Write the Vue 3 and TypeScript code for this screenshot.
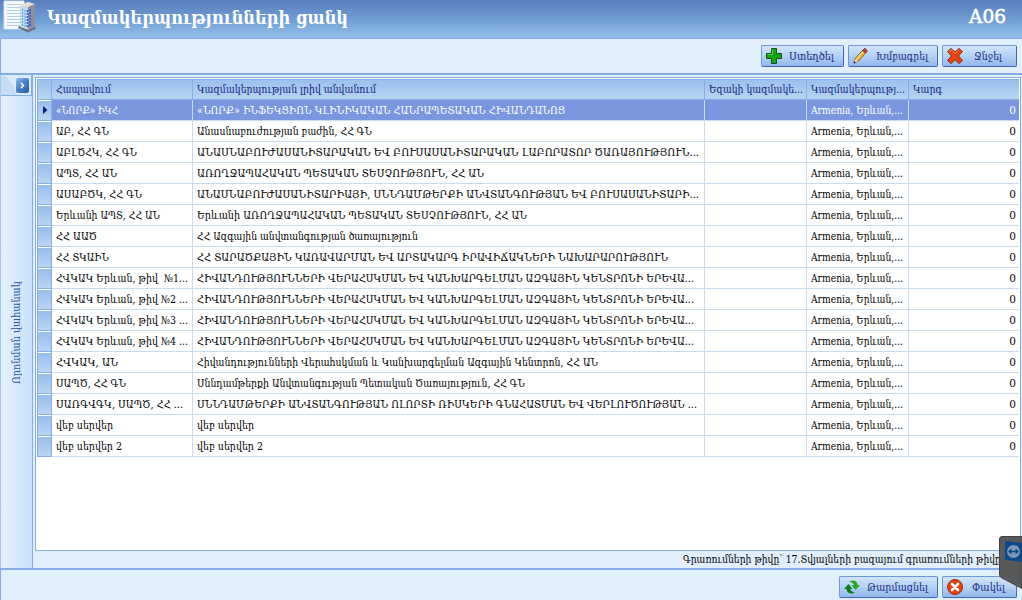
<script setup lang="ts">
import type { Directive } from 'vue'

interface Row {
  short: string
  shortWidth: number
  full: string
  fullWidth: number
}

// Condenses or stretches a label so it takes exactly the given advance width.
const vFit: Directive<HTMLElement, number> = {
  mounted(el, { value, arg }) {
    if (arg === 'vertical') {
      el.style.transform = `scaleY(${value / el.offsetHeight})`
      return
    }
    const natural = el.getBoundingClientRect().width
    el.style.transform = `scaleX(${value / natural})`
    el.style.marginRight = `${value - natural}px`
  },
}

const centre = 'ՀԻՎԱՆԴՈՒԹՅՈՒՆՆԵՐԻ ՎԵՐԱՀՍԿՄԱՆ ԵՎ ԿԱՆԽԱՐԳԵԼՄԱՆ ԱԶԳԱՅԻՆ ԿԵՆՏՐՈՆԻ ԵՐԵՎԱ...'

const columns = [
  { label: 'Հապավում', width: 55 },
  { label: 'Կազմակերպության լրիվ անվանում', width: 179 },
  { label: 'Եզակի կազմակե...', width: 94 },
  { label: 'Կազմակերպությ...', width: 94 },
  { label: 'Կարգ', width: 29 },
]

const rows: Row[] = [
  { short: '«ՆՈՐՔ» ԻԿՀ', shortWidth: 62, full: '«ՆՈՐՔ» ԻՆՖԵԿՑԻՈՆ ԿԼԻՆԻԿԱԿԱՆ ՀԱՆՐԱՊԵՏԱԿԱՆ ՀԻՎԱՆԴԱՆՈՑ', fullWidth: 368 },
  { short: 'ԱԲ, ՀՀ ԳՆ', shortWidth: 53, full: 'Անասնաբուժության բաժին, ՀՀ ԳՆ', fullWidth: 175 },
  { short: 'ԱԲԼԾՀԿ, ՀՀ ԳՆ', shortWidth: 81, full: 'ԱՆԱՍՆԱԲՈՒԺԱՍԱՆԻՏԱՐԱԿԱՆ ԵՎ ԲՈՒՍԱՍԱՆԻՏԱՐԱԿԱՆ ԼԱԲՈՐԱՏՈՐ ԾԱՌԱՅՈՒԹՅՈՒՆ...', fullWidth: 502 },
  { short: 'ԱՊՏ, ՀՀ ԱՆ', shortWidth: 61, full: 'ԱՌՈՂՋԱՊԱՀԱԿԱՆ ՊԵՏԱԿԱՆ ՏԵՍՉՈՒԹՅՈՒՆ, ՀՀ ԱՆ', fullWidth: 287 },
  { short: 'ԱՍԱԲԾԿ, ՀՀ ԳՆ', shortWidth: 86, full: 'ԱՆԱՍՆԱԲՈՒԺԱՍԱՆԻՏԱՐԻԱՅԻ, ՍՆՆԴԱՄԹԵՐՔԻ ԱՆՎՏԱՆԳՈՒԹՅԱՆ ԵՎ ԲՈՒՍԱՍԱՆԻՏԱՐԻ...', fullWidth: 502 },
  { short: 'Երևանի ԱՊՏ, ՀՀ ԱՆ', shortWidth: 104, full: 'Երևանի ԱՌՈՂՋԱՊԱՀԱԿԱՆ ՊԵՏԱԿԱՆ ՏԵՍՉՈՒԹՅՈՒՆ, ՀՀ ԱՆ', fullWidth: 330 },
  { short: 'ՀՀ ԱԱԾ', shortWidth: 41, full: 'ՀՀ Ազգային անվտանգության ծառայություն', fullWidth: 221 },
  { short: 'ՀՀ ՏԿԱԻՆ', shortWidth: 53, full: 'ՀՀ ՏԱՐԱԾՔԱՅԻՆ ԿԱՌԱՎԱՐՄԱՆ ԵՎ ԱՐՏԱԿԱՐԳ ԻՐԱՎԻՃԱԿՆԵՐԻ ՆԱԽԱՐԱՐՈՒԹՅՈՒՆ', fullWidth: 471 },
  { short: 'ՀՎԿԱԿ Երևան, թիվ  №1...', shortWidth: 132, full: centre, fullWidth: 497 },
  { short: 'ՀՎԿԱԿ Երևան, թիվ №2 ...', shortWidth: 132, full: centre, fullWidth: 497 },
  { short: 'ՀՎԿԱԿ Երևան, թիվ №3 ...', shortWidth: 132, full: centre, fullWidth: 497 },
  { short: 'ՀՎԿԱԿ Երևան, թիվ №4 ...', shortWidth: 132, full: centre, fullWidth: 497 },
  { short: 'ՀՎԿԱԿ, ԱՆ', shortWidth: 62, full: 'Հիվանդությունների Վերահսկման և Կանխարգելման Ազգային Կենտրոն, ՀՀ ԱՆ', fullWidth: 401 },
  { short: 'ՍԱՊԾ, ՀՀ ԳՆ', shortWidth: 70, full: 'Սննդամթերքի Անվտանգության Պետական Ծառայություն, ՀՀ ԳՆ', fullWidth: 328 },
  { short: 'ՍԱՌԳՎԳԿ, ՍԱՊԾ, ՀՀ ...', shortWidth: 127, full: 'ՍՆՆԴԱՄԹԵՐՔԻ ԱՆՎՏԱՆԳՈՒԹՅԱՆ ՈԼՈՐՏԻ ՌԻՍԿԵՐԻ ԳՆԱՀԱՏՄԱՆ ԵՎ ՎԵՐԼՈՒԾՈՒԹՅԱՆ ...', fullWidth: 500 },
  { short: 'վեբ սերվեր', shortWidth: 57, full: 'վեբ սերվեր', fullWidth: 57 },
  { short: 'վեբ սերվեր 2', shortWidth: 66, full: 'վեբ սերվեր 2', fullWidth: 66 },
]
</script>

<template>
  <div class="window">
    <header class="titlebar">
      <svg class="logo" width="34" height="34" viewBox="0 0 34 34">
        <path d="M1 1H21V29H1Z" fill="#f4f9fb" stroke="#d5e6ef" />
        <path d="M4 4.500H18M4 7.500H18M4 10.500H18M4 13.500H18M4 16.500H18M4 19.500H18M4 22.500H18M4 25.500H18" stroke="#b4d0e0" />
        <path d="M15 28L25 32.500L33 28.500L31 26H16Z" fill="#6e7180" />
        <path d="M17 5L26 7V30L17 27Z" fill="#c9d9ea" />
        <path d="M25 7L32 4V27L25 30Z" fill="#8b8fa3" />
        <path d="M17 5L25 2L32 4L25 7Z" fill="#ecdcd4" />
        <path d="M19.500 9V26M22 10V27" stroke="#5fb0ee" stroke-width="1.300" stroke-dasharray="2 1" />
        <path d="M24.500 10V28M27 9V27" stroke="#2e63d8" stroke-width="1.600" stroke-dasharray="2 1" />
      </svg>
      <h1><span v-fit="301" class="fit">Կազմակերպությունների ցանկ</span></h1>
      <span class="code"><span v-fit="37" class="fit">A06</span></span>
    </header>

    <div class="toolbar">
      <button class="btn create">
        <svg width="18" height="18" viewBox="0 0 18 18">
          <path d="M6.500 1.500H11.500V6.500H16.500V11.500H11.500V16.500H6.500V11.500H1.500V6.500H6.500Z" fill="#12a512" stroke="#1c4d1c" />
          <path d="M7.500 2.500V7.500H2.500" fill="none" stroke="#63d24e" />
        </svg>
        <span v-fit="45" class="fit">Ստեղծել</span>
      </button>
      <button class="btn edit">
        <svg width="16" height="18" viewBox="0 0 16 18">
          <path d="M2 16L3.500 11L11 3L14 5.500L6.500 14Z" fill="#f4b63c" stroke="#5f4a33" stroke-width="0.800" />
          <path d="M4.500 12L12 4" stroke="#ffe79b" />
          <path d="M10.500 3.500L12.500 1.500Q15 2 15 4.500L13.500 6Z" fill="#cf3b2a" stroke="#6b2b23" stroke-width="0.800" />
          <path d="M2 16L3.200 12L6 14.200Z" fill="#f8dfb2" />
          <path d="M1.500 16.500L2.300 14L4 15.500Z" fill="#222" />
        </svg>
        <span v-fit="52" class="fit">Խմբագրել</span>
      </button>
      <button class="btn remove">
        <svg width="18" height="18" viewBox="0 0 18 18">
          <path d="M5 1.500L9 5L13 1.500L16.500 4.500L12.500 9L16.500 13.500L13 16.500L9 12.800L5 16.500L1.500 13.500L5.500 9L1.500 4.500Z" fill="#ea4310" stroke="#8c2a12" stroke-linejoin="round" />
          <path d="M3 4.500L5 3L9 6.500L13 3" fill="none" stroke="#ff8a55" />
        </svg>
        <span v-fit="28" class="fit">Ջնջել</span>
      </button>
    </div>

    <main class="content">
      <aside class="side">
        <div class="side-head">
          <svg width="31" height="19" viewBox="0 0 31 19">
            <path d="M0 0H4Q13 6 15 19H0Z" fill="#c5dcf5" />
          </svg>
          <span class="expand">
            <svg width="13" height="15" viewBox="0 0 13 15"><path d="M5 5L7.500 7.500L5 10" fill="none" stroke="#fff" stroke-width="1.500" /></svg>
          </span>
        </div>
        <div class="side-body">
          <span class="side-label"><span v-fit:vertical="103" class="side-text">Որոնման վահանակ</span></span>
        </div>
      </aside>

      <section class="panel">
        <div class="grid-frame">
          <div class="row head">
            <div class="mark"></div>
            <div v-for="c in columns" :key="c.label" class="cell">
              <span v-fit="c.width" class="fit">{{ c.label }}</span>
            </div>
          </div>
          <div v-for="(r, i) in rows" :key="i" class="row" :class="{ selected: i === 0 }">
            <div class="mark">
              <svg v-if="i === 0" width="5" height="8" viewBox="0 0 5 8"><path d="M0 0L4.500 4L0 8Z" fill="#0b1f7c" /></svg>
            </div>
            <div class="cell"><span v-fit="r.shortWidth" class="fit">{{ r.short }}</span></div>
            <div class="cell"><span v-fit="r.fullWidth" class="fit">{{ r.full }}</span></div>
            <div class="cell"></div>
            <div class="cell"><span v-fit="92" class="fit">Armenia, Երևան,...</span></div>
            <div class="cell number">0</div>
          </div>
        </div>
        <div class="status"><span v-fit="318" class="fit">Գրառումների թիվը՝ 17.Տվյալների բազայում գրառումների թիվը</span></div>
      </section>
    </main>

    <footer class="actions">
      <button class="btn refresh">
        <svg width="16" height="16" viewBox="0 0 16 16">
          <path d="M5 2.200Q13 0 13.500 6H16L11.500 11L7.500 6H10Q9.500 3.800 5 2.200Z" fill="#22a822" />
          <path d="M11 13.800Q3 16 2.500 10H0L4.500 5L8.500 10H6Q6.500 12.200 11 13.800Z" fill="#0b7d18" />
        </svg>
        <span v-fit="61" class="fit">Թարմացնել</span>
      </button>
      <button class="btn close">
        <svg width="18" height="18" viewBox="0 0 18 18">
          <circle cx="9" cy="9" r="7.500" fill="#e2420f" stroke="#a32b10" />
          <path d="M6 6L12 12M12 6L6 12" stroke="#fff" stroke-width="2.600" stroke-linecap="round" />
        </svg>
        <span v-fit="33" class="fit">Փակել</span>
      </button>
    </footer>

    <svg class="remote-tab" width="23" height="53" viewBox="0 0 23 53">
      <path d="M3 0.500H23V52.500L2 41.500Q0.500 40.500 0.500 38V3Q0.500 0.500 3 0.500Z" fill="#58595b" stroke="#434446" />
      <path d="M6 6Q6 5 7 5L23 7V26L7 24Q6 24 6 23Z" fill="#0b4a8a" />
      <circle cx="14.500" cy="15.500" r="6.500" fill="#7f98b2" />
      <path d="M9 15.500L12.500 12.500V14.700H16.500V12.500L20 15.500L16.500 18.500V16.300H12.500V18.500Z" fill="#0b4a8a" />
    </svg>
  </div>
</template>

<style>
body {
  margin: 0;
  overflow: hidden;
}
</style>

<style scoped>
.window {
  position: relative;
  display: flex;
  flex-direction: column;
  width: 1022px;
  height: 600px;
  overflow: hidden;
  box-sizing: border-box;
  background: #e1effd;
  color: #000;
  font-family: 'DejaVu Serif', serif;
  font-size: 10.500px;
}
.window * {
  box-sizing: border-box;
}
.fit {
  display: inline-block;
  transform-origin: 0 50%;
  white-space: pre;
}
.titlebar {
  display: flex;
  flex: none;
  height: 39px;
  padding: 0 16px 0 3px;
  border-bottom: 1px solid #86ade5;
  background: linear-gradient(#587ebe, #6f9cd2 50%, #93c1ea);
  color: #fff;
}
.logo {
  flex: none;
}
h1 {
  margin: 0 auto 0 10px;
  font-size: 18px;
  line-height: 35px;
}
.code {
  font-size: 18px;
  line-height: 34px;
  -webkit-text-stroke: 0.600px #fff;
}
.toolbar {
  display: flex;
  flex: none;
  justify-content: flex-end;
  gap: 4px;
  height: 36px;
  padding: 6px 5px 0 0;
  border-left: 1px solid #86ade5;
  border-bottom: 2px solid #86ade5;
}
.btn {
  display: flex;
  align-items: center;
  height: 22px;
  margin: 0;
  padding: 0 0 0 3px;
  border: 1px solid #6d97d8;
  border-right-color: #4469b4;
  border-bottom-color: #4469b4;
  border-radius: 2px;
  background: linear-gradient(#d2e4fa, #b5d1f4 50%, #91b7ea);
  color: #1b2a86;
  font: inherit;
}
.btn svg {
  flex: none;
}
.create {
  width: 83px;
}
.create .fit {
  margin-left: 6px;
}
.edit {
  width: 90px;
}
.edit .fit {
  margin-left: 8px;
}
.remove {
  width: 75px;
}
.remove .fit {
  margin-left: 10px;
}
.content {
  display: flex;
  flex: none;
  height: 493px;
}
.side {
  display: flex;
  flex-direction: column;
  flex: none;
  width: 33px;
  border-right: 1px solid #86ade5;
  border-left: 1px solid #a5c8f2;
}
.side-head {
  display: flex;
  flex: none;
  height: 21px;
  padding-top: 1px;
  border-right: 1px solid #86ade5;
  border-bottom: 1px solid #86ade5;
  background: #dcebfc;
}
.side-head > svg {
  flex: none;
  margin-right: -16px;
}
.expand {
  flex: none;
  width: 13px;
  height: 15px;
  margin-top: 2px;
  border-radius: 2px;
  background: linear-gradient(135deg, #8db9ea, #4a7fc6 50%, #2c5da4);
}
.expand svg {
  display: block;
}
.side-body {
  flex: 1;
  padding: 185px 0 0 8px;
  background: linear-gradient(90deg, #e6f2ff, #c9e0fb);
}
.side-label {
  display: block;
  width: 15px;
  height: 103px;
  transform: rotate(180deg);
  color: #2f57a5;
}
.side-text {
  display: inline-block;
  transform-origin: 50% 0;
  line-height: 15px;
  white-space: nowrap;
  writing-mode: vertical-rl;
}
.panel {
  flex: 1;
  min-width: 0;
  padding: 2px 1px 0 2px;
}
.grid-frame {
  height: 474px;
  padding: 1px 1px 0;
  overflow: hidden;
  border: 1px solid #86ade5;
  background: #fff;
}
.row {
  display: grid;
  grid-template-columns: 15px 141px 512px 102px 102px 1fr;
  height: 21px;
}
.cell {
  padding-left: 4px;
  overflow: hidden;
  border-right: 1px solid #c8dbf5;
  border-bottom: 1px solid #c8dbf5;
  line-height: 21px;
  white-space: nowrap;
}
.cell:last-child {
  border-right: 0;
}
.number {
  padding-right: 3px;
  text-align: right;
}
.mark {
  display: flex;
  align-items: center;
  padding-left: 5px;
  border-right: 1px solid #86ade5;
  border-left: 1px solid #86ade5;
  border-bottom: 1px solid #86ade5;
  background: linear-gradient(#fff 1px, #98bdeb 1px, #b8d4f3);
}
.head .cell,
.head .mark {
  border-color: #86ade5;
  background: linear-gradient(#9bc0ec, #b7d4f3);
}
.head {
  border-top: 1px solid #86ade5;
}
.head .cell {
  color: #15247f;
  line-height: 18px;
}
.selected .cell {
  background: #7a96df;
  color: #fff;
}
.status {
  padding-left: 648px;
  line-height: 17px;
  white-space: nowrap;
}
.actions {
  display: flex;
  flex: 1;
  justify-content: flex-end;
  gap: 4px;
  padding: 6px 5px 0 0;
  border-top: 2px solid #86ade5;
  border-left: 1px solid #86ade5;
}
.refresh {
  width: 99px;
  padding-left: 4px;
}
.refresh .fit {
  margin-left: 7px;
}
.close {
  width: 75px;
}
.close .fit {
  margin-left: 8px;
}
.remote-tab {
  position: absolute;
  top: 536px;
  right: 0;
}
</style>
